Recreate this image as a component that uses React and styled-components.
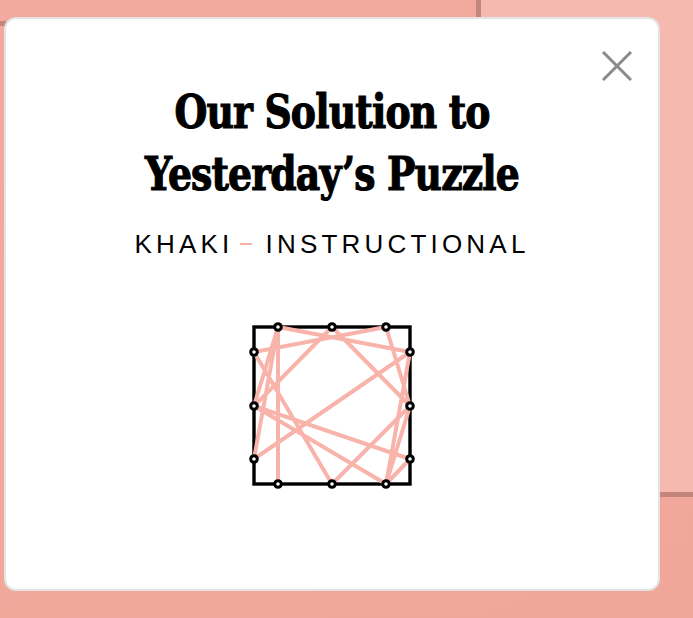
import styled, { createGlobalStyle } from "styled-components";

const GlobalStyle = createGlobalStyle`
  html, body {
    margin: 0;
    padding: 0;
    background: #f2a89c;
  }
`;

const Page = styled.div`
  position: relative;
  width: 693px;
  height: 618px;
  overflow: hidden;
  display: flex;
  align-items: flex-start;
  background: linear-gradient(160deg, #f3a99d 0%, #f1a69a 100%);
`;

const BoardTile = styled.div`
  width: ${(p) => p.width};
  height: ${(p) => p.height};
  flex: ${(p) => (p.width ? "none" : "1")};
  background: ${(p) => p.color || "transparent"};
  border-bottom: 5px solid #c4857c;
  border-left: ${(p) => (p.edge ? "5px solid #c4857c" : "none")};
`;

const Modal = styled.div`
  position: absolute;
  left: 4px;
  top: 17px;
  width: 656px;
  height: 574px;
  box-sizing: border-box;
  background: #fff;
  border: 2px solid #e3e3e3;
  border-radius: 12px;
  display: flex;
  flex-direction: column;
  align-items: center;
  padding-top: 62px;
`;

const CloseButton = styled.button`
  position: absolute;
  top: 31px;
  right: 25px;
  width: 32px;
  height: 32px;
  padding: 0;
  border: none;
  background: none;
  cursor: pointer;
  display: flex;
  align-items: center;
  justify-content: center;
`;

const Title = styled.h1`
  margin: 0;
  font-family: "DejaVu Serif", serif;
  font-weight: 700;
  font-size: 46px;
  line-height: 62px;
  letter-spacing: -1px;
  color: #000;
  -webkit-text-stroke: 1.2px #000;
  text-align: center;
  transform: scaleX(0.82);
`;

const Answer = styled.div`
  margin-top: 24px;
  display: flex;
  align-items: center;
  gap: 7px;
  font-family: "Liberation Sans", Arial, sans-serif;
  font-size: 26px;
  line-height: 30px;
  letter-spacing: 4.2px;
  color: #000;
`;

const Dash = styled.span`
  display: inline-block;
  width: 12px;
  height: 2px;
  background: #f8b1a7;
  margin-right: 6px;
`;

const Diagram = styled.svg`
  margin-top: 60px;
  display: block;
`;

const points = {
  T1: [32, 8], T2: [86, 8], T3: [140, 8],
  R1: [164, 33], R2: [164, 87], R3: [164, 140],
  B1: [32, 165], B2: [86, 165], B3: [140, 165],
  L1: [8, 33], L2: [8, 87], L3: [8, 140],
};

const route = ["R1", "L3", "T1", "R1", "B3", "L2", "T2", "R2", "T3", "L1", "B2", "R2", "B3", "R3", "L2", "T1", "B1"];

const Solution = () => (
  <Diagram width="172" height="172" viewBox="0 0 172 172">
    <rect x="8" y="8" width="156" height="157" fill="none" stroke="#000" strokeWidth="3.4" />
    <polyline
      points={route.map((k) => points[k].join(",")).join(" ")}
      fill="none"
      stroke="#f8b4aa"
      strokeWidth="4"
      strokeLinejoin="round"
      strokeLinecap="round"
    />
    {Object.entries(points).map(([k, [x, y]]) => (
      <circle key={k} cx={x} cy={y} r="3.3" fill="#fff" stroke="#000" strokeWidth="3" />
    ))}
  </Diagram>
);

const App = () => {
  return (
    <>
      <GlobalStyle />
      <Page>
        <BoardTile width="476px" height="21px" />
        <BoardTile height="492px" color="#f6b9b0" edge />
        <Modal>
          <CloseButton aria-label="Close">
            <svg width="30" height="30" viewBox="0 0 30 30">
              <path d="M1 1 L29 29 M29 1 L1 29" stroke="#8a8a8a" strokeWidth="3" />
            </svg>
          </CloseButton>
          <Title>
            Our Solution to
            <br />
            Yesterday’s Puzzle
          </Title>
          <Answer>
            <span>KHAKI</span>
            <Dash />
            <span>INSTRUCTIONAL</span>
          </Answer>
          <Solution />
        </Modal>
      </Page>
    </>
  );
};

export default App;
